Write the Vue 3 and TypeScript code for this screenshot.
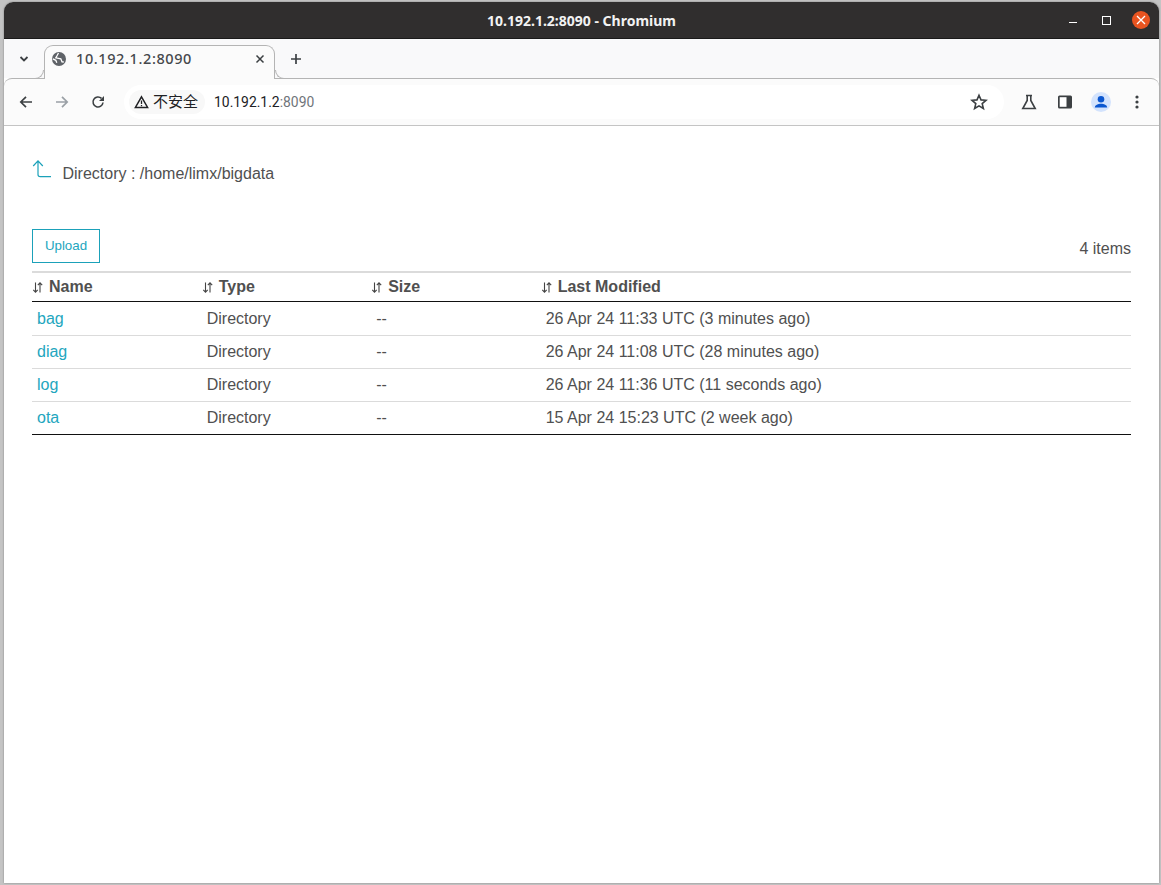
<script setup lang="ts">
interface Row { name: string; type: string; size: string; modified: string }
const rows: Row[] = [
  { name: 'bag', type: 'Directory', size: '--', modified: '26 Apr 24 11:33 UTC (3 minutes ago)' },
  { name: 'diag', type: 'Directory', size: '--', modified: '26 Apr 24 11:08 UTC (28 minutes ago)' },
  { name: 'log', type: 'Directory', size: '--', modified: '26 Apr 24 11:36 UTC (11 seconds ago)' },
  { name: 'ota', type: 'Directory', size: '--', modified: '15 Apr 24 15:23 UTC (2 week ago)' },
]
const headers = ['Name', 'Type', 'Size', 'Last Modified']
</script>

<template>
  <div class="desktop">
    <div class="window">
      <header class="titlebar">
        <span class="title">10.192.1.2:8090 - Chromium</span>
        <div class="winctl">
          <span class="min"></span>
          <span class="max"></span>
          <span class="close">
            <svg width="10" height="10" viewBox="0 0 10 10"><path d="M1 1l8 8M9 1l-8 8" stroke="#fff" stroke-width="1.3" fill="none"/></svg>
          </span>
        </div>
      </header>

      <div class="tabstrip">
        <svg class="tabmenu" width="10" height="6" viewBox="0 0 10 6"><path d="M1.500 1l3.500 3.500L8.500 1" stroke="#3c4043" stroke-width="1.800" fill="none"/></svg>
        <div class="tab">
          <svg class="globe" width="14" height="14" viewBox="0 0 14 14">
            <circle cx="7" cy="7" r="7" fill="#5f6368"/>
            <path d="M0.800 6.800 3.800 8.300 4.800 10.800M6.500 1 5 3.800 3.800 5.800 8.800 6.800 10 9.800 11.800 10" stroke="#fff" stroke-width="1.300" fill="none"/>
          </svg>
          <span class="tabtext">10.192.1.2:8090</span>
          <svg class="tabx" width="10" height="10" viewBox="0 0 10 10"><path d="M1.500 1.500l7 7M8.500 1.500l-7 7" stroke="#3c4043" stroke-width="1.500" fill="none"/></svg>
        </div>
        <svg class="plus" width="12" height="12" viewBox="0 0 12 12"><path d="M6 1v10M1 6h10" stroke="#3c4043" stroke-width="1.700" fill="none"/></svg>
      </div>

      <div class="toolbar">
        <svg class="nav" width="14" height="14" viewBox="0 0 14 14"><path d="M13 7H2M7 1.800 1.800 7 7 12.200" stroke="#3c4043" stroke-width="1.700" fill="none"/></svg>
        <svg class="nav fwd" width="14" height="14" viewBox="0 0 14 14"><path d="M1 7h11M7 1.800 12.200 7 7 12.200" stroke="#9aa0a6" stroke-width="1.700" fill="none"/></svg>
        <svg class="nav reload" width="14" height="14" viewBox="0 0 14 14"><path d="M12 7.500A5 5 0 1 1 10.500 3.400" stroke="#3c4043" stroke-width="1.600" fill="none"/><path d="M13 1v5H8z" fill="#3c4043"/></svg>
        <div class="omnibox">
          <div class="chip">
            <svg width="15" height="14" viewBox="0 0 15 14"><path d="M7.500 1.800 13.600 12.500H1.400z" stroke="#202124" stroke-width="1.500" fill="none"/><path d="M7.500 5.500v3.500M7.500 10v1.300" stroke="#202124" stroke-width="1.300"/></svg>
            <span class="chiptext">不安全</span>
          </div>
          <span class="url">10.192.1.2<span class="port">:8090</span></span>
          <svg class="star" width="18" height="18" viewBox="0 0 18 18"><path d="M9 2.300l2 4.600 5 .4-3.800 3.300 1.200 4.900L9 12.900l-4.400 2.600 1.200-4.900L2 7.300l5-.4z" stroke="#3c4043" stroke-width="1.600" fill="none"/></svg>
        </div>
        <div class="actions">
          <svg width="16" height="16" viewBox="0 0 16 16"><path d="M5 1.500h6M6.200 1.500v5L1.800 14.500h12.400L9.800 6.500v-5" stroke="#3c4043" stroke-width="1.600" fill="none"/></svg>
          <svg width="16" height="16" viewBox="0 0 16 16"><rect x="1" y="1.500" width="14" height="13" rx="1.500" fill="#3c4043"/><rect x="2.700" y="3.200" width="6.800" height="9.600" fill="#fff"/></svg>
          <span class="avatar">
            <svg width="20" height="20" viewBox="0 0 20 20"><circle cx="10" cy="7.300" r="3.300" fill="#0b57d0"/><path d="M3.800 15.500c0-2.600 3.500-3.800 6.200-3.800s6.200 1.200 6.200 3.800z" fill="#0b57d0"/></svg>
          </span>
          <svg width="4" height="14" viewBox="0 0 4 14"><circle cx="2" cy="2" r="1.600" fill="#3c4043"/><circle cx="2" cy="7" r="1.600" fill="#3c4043"/><circle cx="2" cy="12" r="1.600" fill="#3c4043"/></svg>
        </div>
      </div>

      <main class="page">
        <div class="dirline">
          <svg class="up" width="20" height="20" viewBox="0 0 20 20"><path d="M1.200 7 6 1.800 10.800 7M6 2v13.500c0 1.500.8 2.200 2.200 2.200h10.800" stroke="#1ba1b9" stroke-width="1.200" fill="none"/></svg>
          <span class="dirtext">Directory : /home/limx/bigdata</span>
        </div>
        <div class="actionsrow">
          <button class="upload" type="button">Upload</button>
          <span class="count">4 items</span>
        </div>
        <div class="table">
          <div class="row head">
            <div v-for="h in headers" :key="h" class="hcell">
              <svg class="sort" width="12" height="11" viewBox="0 0 12 11"><path d="M3.500 0.500v9.500M1.300 7.800 3.500 10.200 5.700 7.800M8 10.500V1M5.800 3.200 8 0.800 10.200 3.200" stroke="#444" stroke-width="1.100" fill="none"/></svg>
              <span>{{ h }}</span>
            </div>
          </div>
          <div v-for="r in rows" :key="r.name" class="row body">
            <div class="cell"><a class="link">{{ r.name }}</a></div>
            <div class="cell">{{ r.type }}</div>
            <div class="cell">{{ r.size }}</div>
            <div class="cell">{{ r.modified }}</div>
          </div>
        </div>
      </main>
    </div>
  </div>
</template>

<style>
html, body { margin: 0; padding: 0; overflow: hidden; }
</style>

<style scoped>
.desktop {
  width: 1161px;
  height: 885px;
  box-sizing: border-box;
  padding: 2px 2px 2px 4px;
  background: #c4c4c4;
  overflow: hidden;
}
.window {
  height: 100%;
  display: flex;
  flex-direction: column;
  background: #fff;
  border-radius: 9px 9px 0 0;
  overflow: hidden;
  box-shadow: 0 0 2px #777;
}
.titlebar {
  height: 36px;
  flex: none;
  background: #302e2e;
  border-bottom: 1px solid #1a1a1a;
  position: relative;
  display: flex;
  align-items: center;
  justify-content: center;
}
.title {
  color: #f2f2f2;
  font: 700 14px "Noto Sans", sans-serif;
}
.winctl {
  position: absolute;
  right: 9px;
  top: 9px;
  display: flex;
  align-items: center;
}
.min { width: 8px; height: 1px; background: #fff; margin-top: 4px; margin-right: 25px; }
.max { width: 7px; height: 7px; border: 1px solid #fff; margin-right: 21px; }
.close {
  width: 18px;
  height: 18px;
  border-radius: 50%;
  background: #e95420;
  display: flex;
  align-items: center;
  justify-content: center;
}
.tabstrip {
  height: 39px;
  flex: none;
  background: #f9f9fa;
  display: flex;
  align-items: flex-end;
  position: relative;
}
.tabmenu { margin: 0 0 16px 15px; }
.tab {
  width: 231px;
  height: 34px;
  margin-left: 15px;
  box-sizing: border-box;
  border: 1px solid #b4b4b4;
  border-bottom: none;
  border-radius: 9px 9px 0 0;
  background: #fbfbfb;
  display: flex;
  align-items: center;
  padding: 0 9px 7px 7px;
  position: relative;
  top: 1px;
  z-index: 2;
}
.tab::before,
.tab::after {
  content: "";
  position: absolute;
  bottom: 0;
  width: 9px;
  height: 9px;
  box-sizing: border-box;
  border-bottom: 1px solid #b4b4b4;
}
.tab::before {
  left: -10px;
  border-right: 1px solid #b4b4b4;
  border-bottom-right-radius: 9px;
}
.tab::after {
  right: -10px;
  border-left: 1px solid #b4b4b4;
  border-bottom-left-radius: 9px;
}
.globe { flex: none; }
.tabtext {
  margin-left: 10px;
  margin-bottom: 2px;
  flex: 1;
  font: 500 14.500px "Noto Sans", sans-serif;
  letter-spacing: 0.6px;
  color: #45484c;
}
.plus { margin: 0 0 13px 15px; }
.toolbar {
  height: 48px;
  flex: none;
  box-sizing: border-box;
  background: #fbfbfb;
  border-top: 1px solid #b4b4b4;
  border-bottom: 1px solid #c4c4c4;
  border-radius: 8px 8px 0 0;
  display: flex;
  align-items: center;
  padding-left: 15px;
  position: relative;
}
.nav { flex: none; }
.fwd { margin-left: 22px; }
.reload { margin-left: 22px; }
.omnibox {
  margin-left: 19px;
  width: 880px;
  height: 34px;
  border-radius: 17px;
  background: #fff;
  display: flex;
  align-items: center;
  padding-left: 5px;
  box-sizing: border-box;
  position: relative;
}
.chip {
  height: 24px;
  padding: 0 7px 0 5px;
  border-radius: 12px;
  background: #f8f8f8;
  display: flex;
  align-items: center;
  gap: 4px;
}
.chiptext {
  font: 15px "Noto Sans CJK SC", sans-serif;
  color: #202124;
  margin-bottom: 3px;
}
.url {
  margin-left: 9px;
  font: 13.900px "Roboto", sans-serif;
  color: #202124;
}
.port { color: #70757a; }
.star { position: absolute; right: 16px; top: 8px; }
.actions {
  margin-left: 17px;
  display: flex;
  align-items: center;
}
.actions svg { flex: none; }
.actions > svg:nth-child(1) { margin-right: 20px; }
.actions > svg:nth-child(2) { margin-right: 18px; }
.avatar {
  width: 20px;
  height: 20px;
  border-radius: 50%;
  background: #d3e3fd;
  margin-right: 24px;
  display: block;
}
.page {
  flex: 1;
  padding: 32px 28px 0;
  font: 16px "Liberation Sans", Arial, sans-serif;
  color: #505050;
}
.dirline {
  display: flex;
  align-items: flex-start;
  height: 71px;
}
.up { flex: none; margin-top: 1px; }
.dirtext { margin-left: 10.500px; margin-top: 7px; }
.actionsrow {
  display: flex;
  justify-content: space-between;
  align-items: center;
  height: 34px;
}
.upload {
  width: 68px;
  height: 34px;
  box-sizing: border-box;
  background: #fff;
  border: 1px solid #1ba1b9;
  border-radius: 0;
  color: #23a6be;
  font: 13.330px "Liberation Sans", Arial, sans-serif;
  padding: 0 0 2px;
}
.count { margin-top: 5px; }
.table {
  margin-top: 8px;
  border-top: 2px solid #dbdbdb;
  border-bottom: 1px solid #111;
}
.row {
  display: grid;
  grid-template-columns: 169.700px 169.500px 169.500px 1fr;
}
.head {
  height: 28px;
  border-bottom: 1px solid #111;
  margin-bottom: 1px;
  font-weight: 700;
}
.hcell {
  display: flex;
  align-items: center;
  gap: 5px;
}
.sort { flex: none; margin-left: 0; margin-top: 1px; }
.body {
  height: 32px;
  align-items: center;
  border-bottom: 1px solid #dbdbdb;
}
.body:last-child { border-bottom: none; }
.cell { padding-left: 5px; }
.link { color: #23a6be; }
</style>
